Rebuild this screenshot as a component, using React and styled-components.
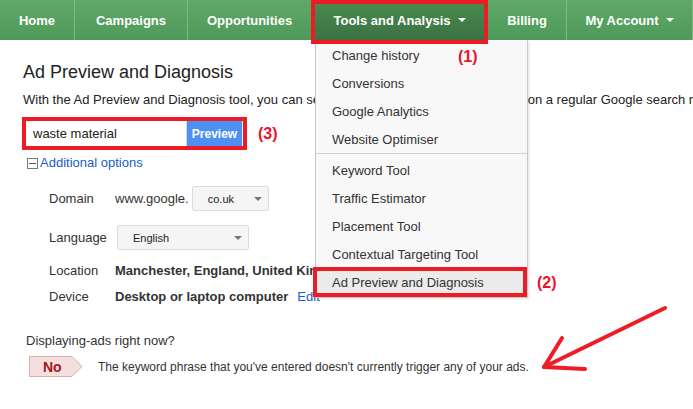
import React from "react";
import styled, { createGlobalStyle } from "styled-components";

const GlobalStyle = createGlobalStyle`
  html, body {
    margin: 0;
    padding: 0;
    background: #fff;
    overflow: hidden;
  }
  body {
    font-family: "Liberation Sans", Arial, sans-serif;
    color: #222;
  }
`;

const navItems = [
  { label: "Home", w: 75 },
  { label: "Campaigns", w: 113 },
  { label: "Opportunities", w: 124 },
  { label: "Tools and Analysis", w: 176, caret: true, active: true },
  { label: "Billing", w: 79 },
  { label: "My Account", w: 126, caret: true },
];

const menuGroups = [
  ["Change history", "Conversions", "Google Analytics", "Website Optimiser"],
  [
    "Keyword Tool",
    "Traffic Estimator",
    "Placement Tool",
    "Contextual Targeting Tool",
    "Ad Preview and Diagnosis",
  ],
];

const App = () => {
  return (
    <Page>
      <GlobalStyle />
      <Nav>
        {navItems.map((item) => (
          <NavItem key={item.label} $w={item.w} $active={item.active}>
            {item.label}
            {item.caret && <Caret />}
          </NavItem>
        ))}
      </Nav>

      <Content>
        <Title>Ad Preview and Diagnosis</Title>
        <Intro>
          With the Ad Preview and Diagnosis tool, you can see your ads exactly
          as they'd appear on a regular Google search results page.
        </Intro>

        <SearchRow>
          <RedFrame>
            <Input>waste material</Input>
            <PreviewButton>Preview</PreviewButton>
          </RedFrame>
          <Note>(3)</Note>
        </SearchRow>

        <Toggle>
          <MinusBox />
          Additional options
        </Toggle>

        <Options>
          <OptionRow $mt={15}>
            <Label>Domain</Label>
            <Value>
              www.google.
              <Select $w={77} $ml={3}>
                co.uk
                <SelectCaret />
              </Select>
            </Value>
          </OptionRow>
          <OptionRow $mt={14}>
            <Label>Language</Label>
            <Value>
              <Select $w={132} $ml={2}>
                English
                <SelectCaret />
              </Select>
            </Value>
          </OptionRow>
          <OptionRow $mt={13}>
            <Label>Location</Label>
            <Strong>Manchester, England, United Kingdom</Strong>
          </OptionRow>
          <OptionRow $mt={10}>
            <Label>Device</Label>
            <Strong>Desktop or laptop computer</Strong>
            <EditLink>Edit</EditLink>
          </OptionRow>
        </Options>

        <Question>Displaying-ads right now?</Question>
        <ResultRow>
          <Badge>
            <BadgeShape viewBox="0 0 54 21" width="54" height="21">
              <path
                d="M0.5 0.5 H43 L53 10.5 L43 20.5 H0.5 Z"
                fill="#f4dfdf"
                stroke="#e3aaaa"
              />
            </BadgeShape>
            <BadgeText>No</BadgeText>
          </Badge>
          <ResultText>
            The keyword phrase that you've entered doesn't currently trigger any
            of your ads.
          </ResultText>
        </ResultRow>
      </Content>

      <Menu>
        {menuGroups.map((group, gi) => (
          <MenuGroup key={gi} $divider={gi > 0}>
            {group.map((entry) => (
              <MenuItem
                key={entry}
                $current={entry === "Ad Preview and Diagnosis"}
              >
                {entry}
              </MenuItem>
            ))}
          </MenuGroup>
        ))}
      </Menu>

      <Mark $x={311} $y={0} $w={177} $h={44} />
      <Mark $x={313} $y={267} $w={214} $h={30} />
      <Callout $x={458} $y={48}>(1)</Callout>
      <Callout $x={537} $y={274}>(2)</Callout>

      <Arrow width="693" height="409" viewBox="0 0 693 409">
        <g
          stroke="#ee1c25"
          strokeWidth="4"
          strokeLinecap="round"
          strokeLinejoin="round"
          fill="none"
        >
          <path d="M665 308 L544 367" />
          <path d="M562 338 L544 367 L585 369" />
        </g>
      </Arrow>
    </Page>
  );
};

export default App;

const Page = styled.div`
  position: relative;
  width: 693px;
  height: 409px;
  overflow: hidden;
`;

const Nav = styled.div`
  display: flex;
  height: 40px;
  background: linear-gradient(#5ea868, #4f995a);
`;

const NavItem = styled.div`
  flex: none;
  width: ${(p) => p.$w}px;
  display: flex;
  align-items: center;
  justify-content: center;
  box-sizing: border-box;
  border-right: 1px solid ${(p) => (p.$active ? "transparent" : "#7cba85")};
  background: ${(p) =>
    p.$active ? "linear-gradient(#4b8b52, #3b7242)" : "transparent"};
  color: #fff;
  font-size: 13px;
  font-weight: bold;
  white-space: nowrap;
`;

const Caret = styled.span`
  display: inline-block;
  margin-left: 7px;
  border-left: 4px solid transparent;
  border-right: 4px solid transparent;
  border-top: 4px solid #fff;
`;

const Content = styled.div`
  padding-left: 23px;
`;

const Title = styled.div`
  margin-top: 21px;
  font-size: 18px;
  line-height: 22px;
  color: #222;
`;

const Intro = styled.div`
  margin-top: 9px;
  font-size: 13px;
  line-height: 16px;
  color: #222;
  white-space: nowrap;
`;

const SearchRow = styled.div`
  display: flex;
  align-items: center;
  margin-top: 9px;
  margin-left: -1px;
`;

const RedFrame = styled.div`
  display: flex;
  width: 217px;
  height: 25px;
  border: 4px solid #ec1c24;
  background: #fff;
`;

const Input = styled.div`
  width: 153px;
  padding-left: 7px;
  display: flex;
  align-items: center;
  font-size: 13px;
  color: #222;
  border-right: 1px solid #d9d9d9;
`;

const PreviewButton = styled.div`
  width: 55px;
  display: flex;
  align-items: center;
  justify-content: center;
  background: #4d8ff2;
  color: #fff;
  font-size: 12px;
  font-weight: bold;
`;

const Note = styled.div`
  margin-left: 11px;
  font-size: 16px;
  font-weight: bold;
  color: #e8142a;
`;

const Toggle = styled.div`
  display: flex;
  align-items: center;
  margin-top: 5px;
  margin-left: 4px;
  font-size: 13px;
  line-height: 16px;
  color: #1a5ccc;
`;

const MinusBox = styled.span`
  position: relative;
  width: 9px;
  height: 9px;
  margin-right: 2px;
  border: 1px solid #777;
  &::after {
    content: "";
    position: absolute;
    left: 1px;
    right: 1px;
    top: 4px;
    height: 1px;
    background: #555;
  }
`;

const Options = styled.div`
  padding-left: 26px;
`;

const OptionRow = styled.div`
  display: flex;
  align-items: center;
  margin-top: ${(p) => p.$mt}px;
  font-size: 13px;
  line-height: 16px;
`;

const Label = styled.div`
  width: 66px;
  color: #333;
`;

const Value = styled.div`
  display: flex;
  align-items: center;
  color: #333;
`;

const Select = styled.div`
  position: relative;
  width: ${(p) => p.$w}px;
  height: 25px;
  margin-left: ${(p) => p.$ml}px;
  box-sizing: border-box;
  padding-left: 15px;
  display: flex;
  align-items: center;
  border: 1px solid #dcdcdc;
  border-radius: 2px;
  background: #f5f5f5;
  font-size: 11px;
  color: #222;
`;

const SelectCaret = styled.span`
  position: absolute;
  right: 6px;
  top: 10px;
  border-left: 4px solid transparent;
  border-right: 4px solid transparent;
  border-top: 4px solid #777;
`;

const Strong = styled.div`
  font-weight: bold;
  color: #333;
  white-space: nowrap;
`;

const EditLink = styled.span`
  margin-left: 9px;
  color: #1a5ccc;
`;

const Question = styled.div`
  margin-top: 28px;
  margin-left: 3px;
  font-size: 13px;
  line-height: 16px;
  color: #333;
`;

const ResultRow = styled.div`
  display: flex;
  align-items: center;
  margin-top: 7px;
  margin-left: 6px;
`;

const Badge = styled.div`
  position: relative;
  width: 54px;
  height: 21px;
  display: flex;
  align-items: center;
`;

const BadgeShape = styled.svg`
  position: absolute;
  left: 0;
  top: 0;
`;

const BadgeText = styled.span`
  position: relative;
  margin-left: 14px;
  font-size: 14px;
  font-weight: bold;
  color: #a8141c;
`;

const ResultText = styled.div`
  margin-left: 15px;
  font-size: 12px;
  color: #333;
  white-space: nowrap;
`;

const Menu = styled.div`
  position: absolute;
  left: 315px;
  top: 40px;
  width: 211px;
  padding-bottom: 1px;
  background: #f8f8f8;
  border: 1px solid #c8c8c8;
  border-top: none;
  box-shadow: 1px 1px 2px rgba(0, 0, 0, 0.12);
`;

const MenuGroup = styled.div`
  padding-top: ${(p) => (p.$divider ? 2 : 1)}px;
  border-top: ${(p) => (p.$divider ? "1px solid #cfcfcf" : "none")};
`;

const MenuItem = styled.div`
  height: 28px;
  display: flex;
  align-items: center;
  padding-left: 16px;
  font-size: 13px;
  color: #333;
  background: ${(p) => (p.$current ? "#ebebeb" : "transparent")};
`;

const Mark = styled.div`
  position: absolute;
  left: ${(p) => p.$x}px;
  top: ${(p) => p.$y}px;
  width: ${(p) => p.$w}px;
  height: ${(p) => p.$h}px;
  box-sizing: border-box;
  border: 4px solid #ec1c24;
  pointer-events: none;
`;

const Callout = styled.div`
  position: absolute;
  left: ${(p) => p.$x}px;
  top: ${(p) => p.$y}px;
  font-size: 16px;
  font-weight: bold;
  color: #e8142a;
`;

const Arrow = styled.svg`
  position: absolute;
  left: 0;
  top: 0;
  pointer-events: none;
`;
